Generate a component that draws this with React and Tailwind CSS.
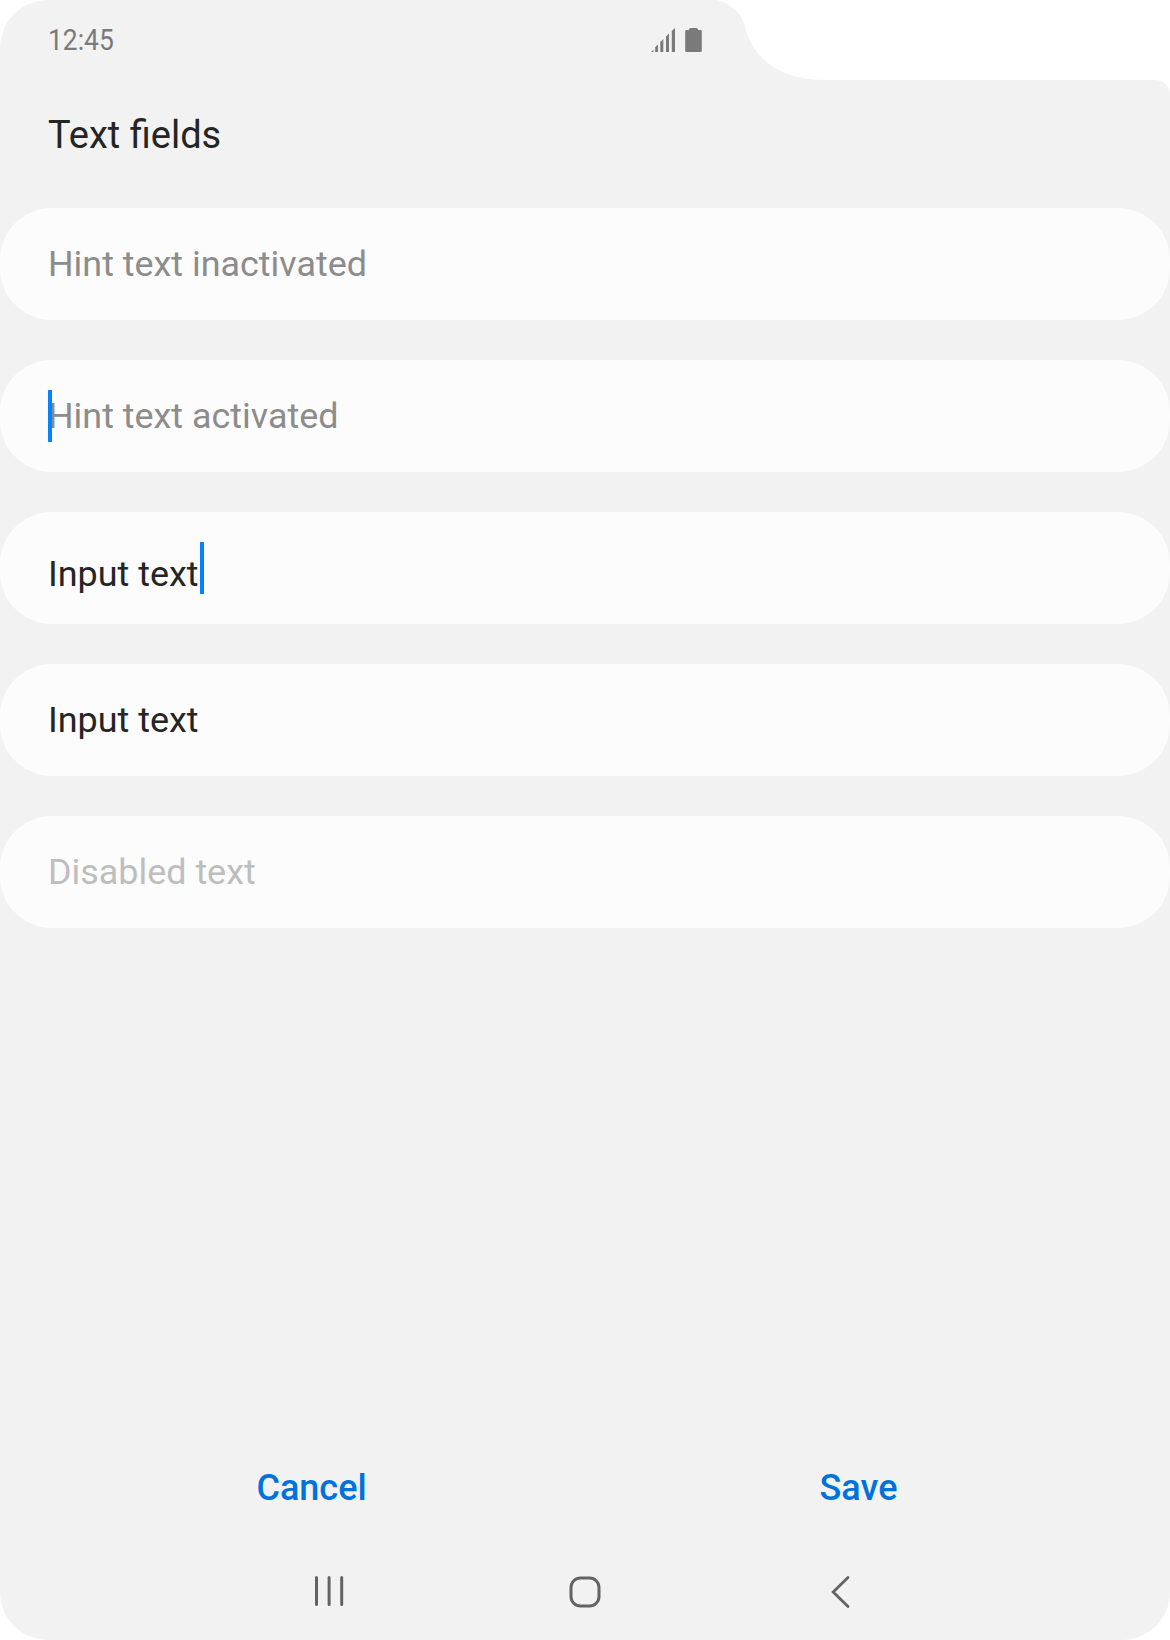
const FIELDS = [
  { text: 'Hint text inactivated', tone: 'text-[#8c8c8c]' },
  { text: 'Hint text activated', tone: 'text-[#8c8c8c]', caret: 'start' },
  { text: 'Input text', tone: 'text-[#252525]', caret: 'end' },
  { text: 'Input text', tone: 'text-[#252525]' },
  { text: 'Disabled text', tone: 'text-[#bebebe]' },
];

function Notch() {
  return (
    <svg className="absolute right-0 top-0" width="470" height="100" viewBox="700 0 470 100" fill="#ffffff">
      <path d="M717 0C732 4 742.5 14 745.5 28C752 58 780 80 824 80H1155A15 15 0 0 1 1170 95V0Z" />
    </svg>
  );
}

function SignalIcon() {
  return (
    <svg width="24" height="24" viewBox="0 0 24 24" fill="#7a7a7a">
      <path d="M0 24L2.4 21.8V24ZM4.2 24V19.2L7 16.4V24ZM9.3 24V14L12.3 11V24ZM15 24V8.4L18 5.4V24ZM20.8 24V3L24 0V24Z" />
    </svg>
  );
}

function BatteryIcon() {
  return (
    <svg width="17" height="24" viewBox="0 0 17 24" fill="#7a7a7a">
      <path d="M5.2 0H11.8L13 1.2V2H15.5Q16.8 2 16.8 3.3V22.7Q16.8 24 15.5 24H1.5Q.2 24 .2 22.7V3.3Q.2 2 1.5 2H4V1.2Z" />
    </svg>
  );
}

function Field({ text, tone, caret }) {
  return (
    <div className="flex h-28 items-center rounded-[52px] bg-[#fcfcfc] pl-12">
      <div className="relative flex h-[52px] items-center">
        <span className={'whitespace-nowrap text-[35.9px] leading-[52px] ' + tone + (caret === 'end' ? ' pt-3' : '')}>{text}</span>
        {caret === 'start' && <span className="absolute left-0 top-0 h-[52px] w-1 bg-[#0381fe]" />}
        {caret === 'end' && <span className="absolute left-[152px] top-0 h-[52px] w-1 bg-[#0381fe]" />}
      </div>
    </div>
  );
}

export default function App() {
  return (
    <div className="h-[1640px] w-[1170px] bg-white font-['Roboto',sans-serif]">
      <div className="relative flex h-full flex-col overflow-hidden rounded-[48px] rounded-tr-none bg-[#f2f2f2]">
        <Notch />
        <header className="flex h-20 items-center pl-12">
          <span className="w-[603px] origin-left scale-x-[0.88] text-[30px] leading-none text-[#7a7a7a]">12:45</span>
          <div className="flex gap-[10px]">
            <SignalIcon />
            <BatteryIcon />
          </div>
        </header>
        <h1 className="flex h-[110px] items-center pl-12 text-[38px] leading-none text-[#252525]">Text fields</h1>
        <main className="mt-[18px] flex flex-col gap-10">
          {FIELDS.map((f, i) => (
            <Field key={i} {...f} />
          ))}
        </main>
        <footer className="mt-auto">
          <div className="flex h-[112px] items-center text-[36px] font-medium text-[#0072de]">
            <button className="ml-[38px] w-[547px] leading-none">Cancel</button>
            <button className="w-[547px] leading-none">Save</button>
          </div>
          <nav className="grid h-24 grid-cols-[457px_256px_457px] items-center">
            <svg className="ml-[313px]" width="32" height="36" viewBox="0 0 32 36" stroke="#636363" strokeWidth="3" strokeLinecap="round">
              <path d="M3.5 3.5V30.5M16.1 3.5V30.5M28.7 3.5V30.5" />
            </svg>
            <svg className="justify-self-center" width="36" height="36" viewBox="0 0 36 36" fill="none" stroke="#636363" strokeWidth="3">
              <rect x="4" y="4" width="28" height="28" rx="9.5" />
            </svg>
            <svg className="ml-[113px]" width="30" height="36" viewBox="0 0 30 36" fill="none" stroke="#636363" strokeWidth="2.8" strokeLinecap="round">
              <path d="M22 3.6L7.2 18L22 32.4" />
            </svg>
          </nav>
        </footer>
      </div>
    </div>
  );
}
